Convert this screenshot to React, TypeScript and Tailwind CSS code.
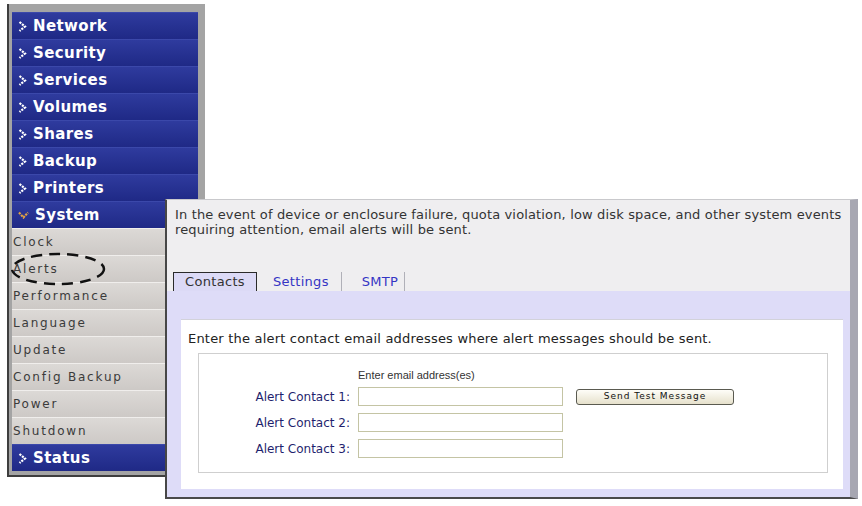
import React from 'react';

const mainMenu = ['Network', 'Security', 'Services', 'Volumes', 'Shares', 'Backup', 'Printers'];
const systemItems = ['Clock', 'Alerts', 'Performance', 'Language', 'Update', 'Config Backup', 'Power', 'Shutdown'];

const Chevron: React.FC<{ down?: boolean }> = ({ down }) =>
  down ? (
    <svg width="11" height="8" viewBox="0 0 11 8" className="shrink-0">
      <polyline points="1,1.5 5.5,6.5 10,1.5" fill="none" stroke="#e2a244" strokeWidth="2.2" strokeDasharray="2.2 1" />
    </svg>
  ) : (
    <svg width="9" height="11" viewBox="0 0 9 11" className="shrink-0">
      <polyline points="1.5,1 7,5.5 1.5,10" fill="none" stroke="#ffffff" strokeWidth="2.2" strokeDasharray="2.2 1" />
    </svg>
  );

const BlueRow: React.FC<{ label: string; down?: boolean }> = ({ label, down }) => (
  <div className="h-[27px] flex items-center gap-[6px] pl-[6px] bg-linear-to-b from-[#2f3b9e] to-[#1f2986] border-t border-[#3b48aa] text-white text-[15px] tracking-[0.4px] font-bold">
    <Chevron down={down} />
    <span>{label}</span>
  </div>
);

const SubRow: React.FC<{ label: string }> = ({ label }) => (
  <div className="h-[27px] flex items-center pl-[1px] bg-linear-to-b from-[#dcd9d6] to-[#cdc9c6] border-t border-[#f0eeec] text-[12px] tracking-[1.8px] text-[#3b3b3b]">
    {label}
  </div>
);

const Sidebar: React.FC = () => (
  <div className="ml-[7px] mt-[4px] w-[198px] bg-[#a4a4a4] border-l-2 border-b-2 border-[#3e3e3e] pl-[3px] pt-[8px] pr-[7px] pb-[4px]">
    {mainMenu.map((item) => (
      <BlueRow key={item} label={item} />
    ))}
    <BlueRow label="System" down />
    {systemItems.map((item) => (
      <SubRow key={item} label={item} />
    ))}
    <BlueRow label="Status" />
  </div>
);

const ContactRow: React.FC<{ n: number; button?: boolean }> = ({ n, button }) => (
  <div className="flex items-center h-[19px]">
    <div className="w-[151px] text-right text-[12px] text-[#1f1f6e]">Alert Contact {n}:</div>
    <input className="ml-[8px] w-[205px] h-[19px] border border-[#c4c4a4] bg-white outline-none" />
    {button && (
      <button className="ml-[13px] w-[158px] h-[16px] rounded-[3px] border border-[#5a5a50] bg-linear-to-b from-[#fefdf8] to-[#e6e1cc] text-[9px] tracking-[1px] text-[#111] leading-none">
        Send Test Message
      </button>
    )}
  </div>
);

const AlertsWindow: React.FC = () => (
  <div className="absolute left-[165px] top-[199px] w-[693px] h-[300px] flex flex-col border-l-2 border-b-2 border-t border-l-[#474747] border-b-[#4a4a4a] border-t-[#c9c9cc] border-r-[8px] border-r-[#a7a7b2] bg-[#dedcf8]">
    <div className="h-[91px] bg-[#efeef0] flex flex-col justify-between pt-[7px]">
      <p className="pl-[8px] pr-[2px] text-[13px] tracking-[0.15px] leading-[15px] text-[#333]">
        In the event of device or enclosure failure, quota violation, low disk space, and other system events
        requiring attention, email alerts will be sent.
      </p>
      <div className="flex items-end pl-[6px] text-[13px] tracking-[0.3px]">
        <div className="w-[84px] h-[19px] flex items-center justify-center border border-[#2a2a2a] border-b-0 bg-[#dcdaf6] text-[#333]">
          Contacts
        </div>
        <div className="h-[19px] flex items-center pl-[16px] pr-[12px] border-r border-[#b0b0b8] text-[#3535c4]">Settings</div>
        <div className="h-[19px] flex items-center pl-[20px] pr-[6px] border-r border-[#b0b0b8] text-[#3535c4]">SMTP</div>
      </div>
    </div>
    <div className="flex-1 pt-[28px] pl-[14px] pr-[7px] pb-[8px]">
      <div className="h-full bg-white border-t border-[#d2d2da] pt-[11px] pl-[7px]">
        <p className="text-[13px] tracking-[0.2px] leading-[15px] text-[#222]">
          Enter the alert contact email addresses where alert messages should be sent.
        </p>
        <div className="mt-[7px] ml-[10px] mr-[15px] h-[120px] border border-[#cfcfcf] pt-[14px]">
          <div className="pl-[159px] text-[11px] leading-[14px] text-[#333] font-['Liberation_Sans',Arial,sans-serif]">
            Enter email address(es)
          </div>
          <div className="mt-[5px] flex flex-col gap-[7px]">
            <ContactRow n={1} button />
            <ContactRow n={2} />
            <ContactRow n={3} />
          </div>
        </div>
      </div>
    </div>
  </div>
);

export default function App() {
  return (
    <div className="relative w-[862px] h-[506px] bg-white overflow-hidden font-['DejaVu_Sans',Verdana,sans-serif]">
      <Sidebar />
      <svg className="absolute left-0 top-0 pointer-events-none" width="200" height="300" viewBox="0 0 200 300">
        <ellipse cx="58" cy="269" rx="46" ry="15" fill="none" stroke="#111" strokeWidth="2.5" strokeDasharray="11 7" />
      </svg>
      <AlertsWindow />
    </div>
  );
}
